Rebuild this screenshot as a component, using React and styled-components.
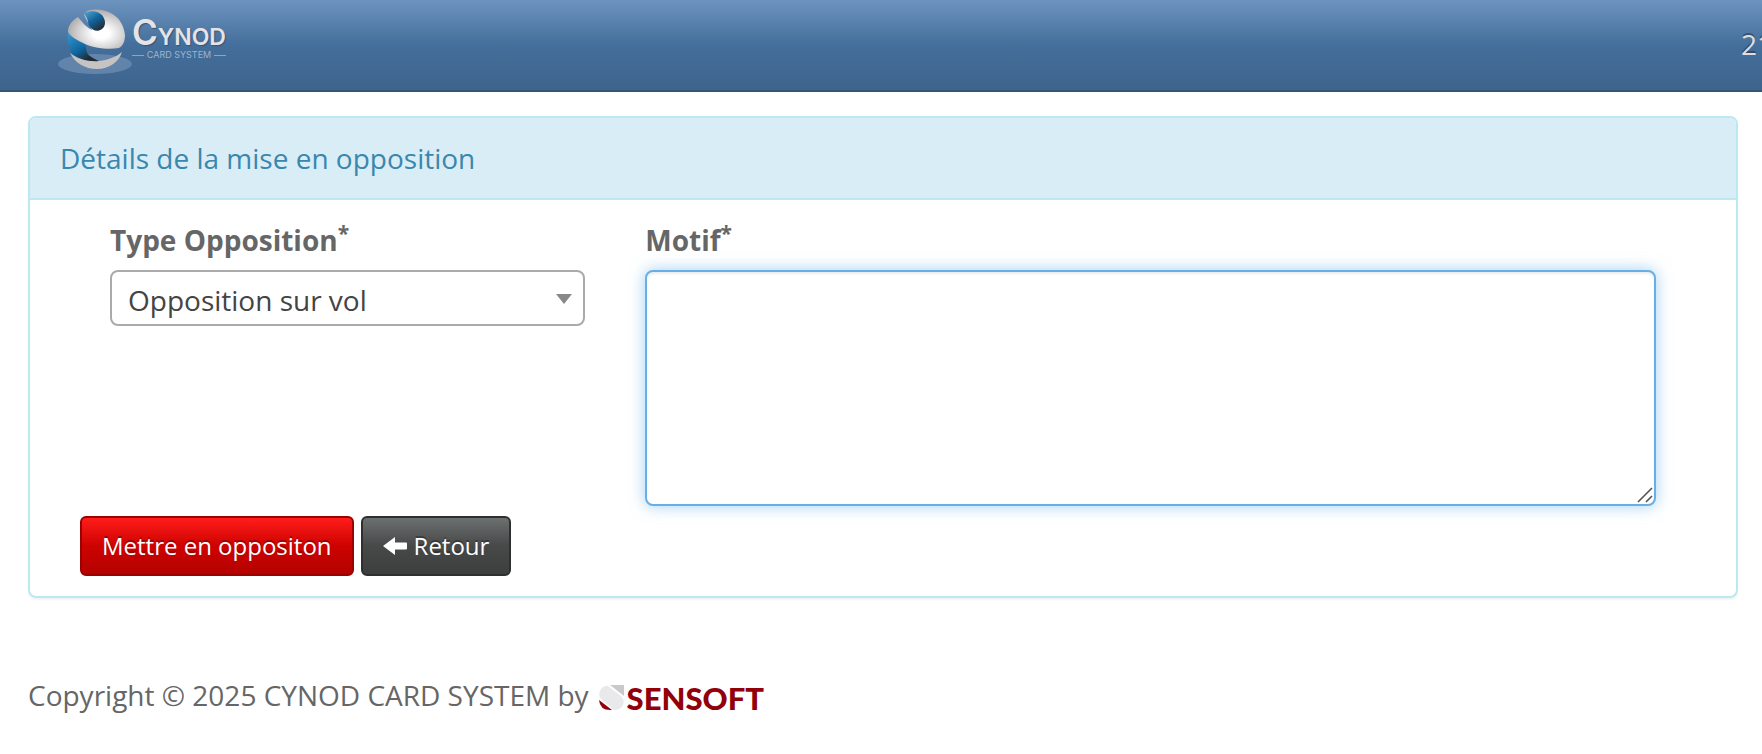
import React, { useState } from 'react'
import styled, { createGlobalStyle } from 'styled-components'

function App() {
  const [type, setType] = useState('vol')
  const [motif, setMotif] = useState('')

  return (
    <>
      <GlobalStyle />
      <Navbar>
        <Brand href="#">
          <BrandMark />
          <BrandText>
            <BrandName><span>C</span>YNOD</BrandName>
            <BrandSub>CARD SYSTEM</BrandSub>
          </BrandText>
        </Brand>
        <Clock>21</Clock>
      </Navbar>

      <Page>
        <Panel>
          <PanelHeading>Détails de la mise en opposition</PanelHeading>
          <PanelBody onSubmit={(e) => e.preventDefault()}>
            <Row>
              <Field>
                <Label htmlFor="type">Type Opposition<sup>*</sup></Label>
                <SelectWrapper>
                  <Select id="type" value={type} onChange={(e) => setType(e.target.value)}>
                    <option value="vol">Opposition sur vol</option>
                  </Select>
                  <Arrow viewBox="0 0 16 10" aria-hidden="true">
                    <path d="M0 0h16l-8 10z" fill="#888" />
                  </Arrow>
                </SelectWrapper>
              </Field>
              <Field>
                <Label htmlFor="motif">Motif<sup>*</sup></Label>
                <TextAreaWrapper>
                  <TextArea id="motif" value={motif} onChange={(e) => setMotif(e.target.value)} />
                  <Grip viewBox="0 0 16 16" aria-hidden="true">
                    <path d="M1 15L15 1M9 15l6-6" stroke="#555" strokeWidth="1.6" />
                  </Grip>
                </TextAreaWrapper>
              </Field>
            </Row>
            <Actions>
              <Button type="submit" $danger>Mettre en oppositon</Button>
              <Button type="button">
                <svg width="24" height="20" viewBox="0 0 24 20" aria-hidden="true">
                  <path d="M0 10L12 1v5.500h11q1 0 1 1v5q0 1-1 1H12V19z" fill="#fff" />
                </svg>
                Retour
              </Button>
            </Actions>
          </PanelBody>
        </Panel>

        <Footer>
          Copyright © 2025 CYNOD CARD SYSTEM by
          <Sensoft href="#">
            <SensoftMark />
            SENSOFT
          </Sensoft>
        </Footer>
      </Page>
    </>
  )
}

function BrandMark() {
  return (
    <svg width="74" height="66" viewBox="0 0 74 66" aria-hidden="true">
      <defs>
        <radialGradient id="shell" cx="0.58" cy="0.6" r="0.58">
          <stop offset="0.25" stopColor="#fff" />
          <stop offset="0.7" stopColor="#d2d0d0" />
          <stop offset="1" stopColor="#b0aeaf" />
        </radialGradient>
        <linearGradient id="ball" x1="0" y1="0" x2="0.7" y2="1">
          <stop offset="0" stopColor="#4fa5d0" />
          <stop offset="0.5" stopColor="#12649c" />
          <stop offset="1" stopColor="#222c38" />
        </linearGradient>
        <linearGradient id="band" x1="0" y1="0" x2="0.8" y2="1">
          <stop offset="0" stopColor="#3a9bd0" />
          <stop offset="0.55" stopColor="#0f659f" />
          <stop offset="0.85" stopColor="#222a32" />
        </linearGradient>
      </defs>
      <ellipse cx="37" cy="56" rx="37" ry="10" fill="#6d8db3" opacity="0.75" />
      <path d="M10 23C9 31 10 39 14 46c8 6 18 8 29 8-6-3-11-5-14-9-1-3-1-6-2-9C20 33 14 29 10 23z" fill="url(#band)" />
      <path d="M20 9C13 13 10 18 10 24c3 5 9 8 17 12 8 4 24 6 34 4 4-2 6-7 6-13C66 18 62 11 56 7 47 1 34 0 28 4l-2 3 8 15C29 20 24 14 20 9z" fill="url(#shell)" />
      <path d="M12 45c7 6 18 9 29 8 9-1 17-4 23-9-3 10-13 17-25 17-12 0-22-6-27-16z" fill="#c6c3c3" />
      <path d="M27 5c6-3 13-2 17 2 4 5 4 11 0 14-4 3-9 2-12-2-3-4-1-7-5-12z" fill="url(#ball)" />
    </svg>
  )
}

function SensoftMark() {
  return (
    <svg width="26" height="26" viewBox="0 0 26 26" aria-hidden="true">
      <path d="M11 0h14v11z" fill="#c9c9ca" />
      <path d="M9 1L22 11q4 4 2 9-2 5-9 5L3 15Q-2 10 2 4q3-4 7-3z" fill="#e9e8ea" />
      <path d="M0 15l13 10Q1 26 0 15z" fill="#92000a" />
    </svg>
  )
}

const GlobalStyle = createGlobalStyle`
  *{
    box-sizing: border-box;
  }
  body{
    margin: 0;
    background: #fff;
    color: #666;
    font-family: "Open Sans", "Noto Sans", sans-serif;
    font-size: 28px;
    line-height: 40px;
    overflow-x: hidden;
  }
`
const Navbar = styled.header`
  display: flex;
  justify-content: space-between;
  height: 92px;
  padding-left: 58px;
  overflow: hidden;
  background: linear-gradient(#6d94bf, #446e9b 50%, #3e648d);
  border-bottom: 2px solid #345578;
`
const Brand = styled.a`
  display: flex;
  padding-top: 8px;
  color: #e4e4e6;
  text-decoration: none;
`
const BrandText = styled.span`
  display: flex;
  flex-direction: column;
  width: 94px;
  padding-top: 4px;
`
const BrandName = styled.span`
  height: 37px;
  font-family: Inter, sans-serif;
  font-size: 23px;
  font-weight: 600;
  white-space: nowrap;
  text-shadow: 1px 1px 1px #345578;
  span{
    font-size: 35px;
  }
`
const BrandSub = styled.span`
  display: flex;
  align-items: center;
  gap: 3px;
  color: #9db4cf;
  font-family: Inter, sans-serif;
  font-size: 9px;
  line-height: 12px;
  white-space: nowrap;
  &::before, &::after{
    content: "";
    flex: 1;
    height: 1px;
    background: #8ba6c5;
  }
`
const Clock = styled.span`
  width: 21px;
  padding-top: 24px;
  color: #ddd;
  white-space: nowrap;
  text-shadow: 0 -2px 0 rgba(0, 0, 0, 0.3);
`
const Page = styled.main`
  padding: 24px 24px 40px 28px;
`
const Panel = styled.section`
  border: 2px solid #bce8f1;
  border-radius: 8px;
  box-shadow: 0 2px 2px rgba(0, 0, 0, 0.05);
`
const PanelHeading = styled.div`
  padding: 20px 30px;
  color: #3a87ad;
  background: #d9edf7;
  border-bottom: 2px solid #bce8f1;
  border-radius: 6px 6px 0 0;
`
const PanelBody = styled.form`
  padding: 20px 50px;
`
const Row = styled.div`
  display: grid;
  grid-template-columns: 1fr 2fr;
`
const Field = styled.div`
  padding: 0 30px;
`
const Label = styled.label`
  display: block;
  margin-bottom: 10px;
  font-weight: 700;
  sup{
    position: relative;
    top: -0.5em;
    font-size: 75%;
    line-height: 0;
    vertical-align: baseline;
  }
`
const SelectWrapper = styled.div`
  position: relative;
`
const Select = styled.select`
  display: block;
  width: 100%;
  height: 56px;
  padding: 4px 44px 0 16px;
  appearance: none;
  color: #444;
  background: #fff;
  border: 2px solid #aaa;
  border-radius: 8px;
  font: inherit;
`
const Arrow = styled.svg`
  position: absolute;
  top: 24px;
  right: 13px;
  width: 16px;
  height: 10px;
  pointer-events: none;
`
const TextAreaWrapper = styled.div`
  position: relative;
`
const TextArea = styled.textarea`
  display: block;
  width: 100%;
  height: 236px;
  padding: 12px 24px;
  color: #666;
  background: #fff;
  border: 2px solid #66afe9;
  border-radius: 8px;
  outline: 0;
  box-shadow: inset 0 2px 2px rgba(0, 0, 0, 0.075), 0 0 16px rgba(102, 175, 233, 0.6);
  font: inherit;
  resize: vertical;
  &::-webkit-resizer{
    background: transparent;
  }
`
const Grip = styled.svg`
  position: absolute;
  right: 3px;
  bottom: 3px;
  width: 16px;
  height: 16px;
  pointer-events: none;
`
const Actions = styled.div`
  display: flex;
  gap: 7px;
  margin-top: 10px;
`
const Button = styled.button`
  display: inline-flex;
  align-items: center;
  gap: 7px;
  height: 60px;
  padding: 0 20px;
  color: #fff;
  background: ${(p) => (p.$danger
    ? 'linear-gradient(#ff1d1b, #cd0200 50%, #b40200)'
    : 'linear-gradient(#6d7070, #474949 50%, #3d3f3f)')};
  border: 2px solid ${(p) => (p.$danger ? '#9a0200' : '#2e2f2f')};
  border-radius: 6px;
  font-family: inherit;
  font-size: 24px;
  line-height: 36px;
  text-shadow: 0 -2px 0 rgba(0, 0, 0, 0.3);
  cursor: pointer;
`
const Footer = styled.footer`
  display: flex;
  align-items: center;
  margin-top: 77px;
`
const Sensoft = styled.a`
  display: inline-flex;
  align-items: center;
  gap: 2px;
  margin-left: 10px;
  padding-top: 6px;
  color: #92000a;
  font-family: Lato, sans-serif;
  font-size: 31px;
  font-weight: 900;
  line-height: 34px;
  text-decoration: none;
`

export default App
